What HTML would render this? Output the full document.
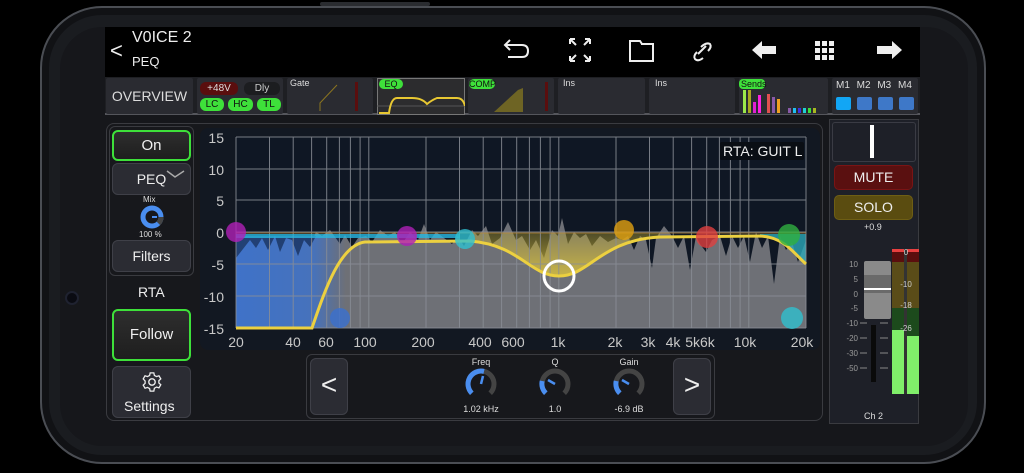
<!DOCTYPE html>
<html><head><meta charset="utf-8"><style>
*{margin:0;padding:0;box-sizing:border-box}
body{width:1024px;height:473px;background:#000;position:relative;overflow:hidden;font-family:"Liberation Sans","DejaVu Sans",sans-serif;color:#e8e8e8}
.a{position:absolute}
.frame{left:40px;top:6px;width:946px;height:458px;border-radius:62px;background:#1a1c20;border:2px solid #4a4d53;box-shadow:inset 0 0 0 7px #111215}
.screen{left:60px;top:27px;width:908px;height:419px;border-radius:42px;background:#16171b;overflow:hidden}
.hdr{left:105px;top:27px;width:815px;height:50px;background:#000}
.tile{background:#2a2b31;border-radius:2px}
.btn{background:#2b2c33;border:1.5px solid #3f4048;border-radius:6px;text-align:center;color:#eee}
.gbtn{background:linear-gradient(#2e2e2e,#1e1e1e);border:2px solid #3ee03a;border-radius:6px;text-align:center;color:#f0f0f0}
.pill{border-radius:6px;font-size:10px;text-align:center;line-height:13px}
.lbl{font-size:9px;color:#ddd}
</style></head><body>
<div class="a frame"></div>
<div class="a" style="left:320px;top:2px;width:110px;height:4px;background:#2a2c30;border-radius:2px"></div>
<div class="a screen"></div>
<div class="a" style="left:65px;top:291px;width:14px;height:14px;border-radius:50%;background:#0a0b12;border:2px solid #1f2230"></div>
<div class="a hdr"></div>
<div class="a" style="left:110px;top:38px;font-size:22px;color:#eee">&lt;</div>
<div class="a" style="left:132px;top:29px;font-size:16px;color:#eee">V0ICE 2</div>
<div class="a" style="left:132px;top:54px;font-size:13px;color:#eee">PEQ</div>
<svg class="a" style="left:500px;top:34px" width="420" height="34" viewBox="0 0 420 34" fill="none" stroke="#eee" stroke-width="2">
<path d="M10 6 L5 11 L10 16 M5 11 H22 Q28 11 28 17 Q28 23 22 23 H8"/>
<path d="M70 5 L76 11 M70 5 h5 M70 5 v5 M90 5 L84 11 M90 5 h-5 M90 5 v5 M70 27 L76 21 M70 27 h5 M70 27 v-5 M90 27 L84 21 M90 27 h-5 M90 27 v-5"/>
<path d="M130 7 H140 L142 10 H153 V27 H130 Z M141 10 H153"/>
<path d="M198 20 L206 12 M201 13 Q206 8 210 10 Q212 13 208 17 M203 24 Q198 28 195 25 Q193 22 197 18"/>
<polygon points="252,16 262,7 262,12 276,12 276,20 262,20 262,25" fill="#eee" stroke="none"/>
<g fill="#eee" stroke="none"><rect x="315" y="7" width="5" height="5"/><rect x="322" y="7" width="5" height="5"/><rect x="329" y="7" width="5" height="5"/><rect x="315" y="14" width="5" height="5"/><rect x="322" y="14" width="5" height="5"/><rect x="329" y="14" width="5" height="5"/><rect x="315" y="21" width="5" height="5"/><rect x="322" y="21" width="5" height="5"/><rect x="329" y="21" width="5" height="5"/></g>
<polygon points="402,16 392,7 392,12 377,12 377,20 392,20 392,25" fill="#eee" stroke="none"/>
</svg>
<!-- strip -->
<div class="a" style="left:105px;top:77px;width:815px;height:38px;background:#1e1f23;border-bottom:2px solid #55565c"></div>
<div class="a tile" style="left:106px;top:78px;width:87px;height:36px;font-size:14px;line-height:36px;text-align:center;color:#ddd">OVERVIEW</div>
<div class="a tile" style="left:197px;top:78px;width:86px;height:36px"></div>
<div class="a pill" style="left:200px;top:82px;width:38px;background:#5a0e0e;color:#ddd">+48V</div>
<div class="a pill" style="left:244px;top:82px;width:36px;background:#1c1d20;color:#ccc">Dly</div>
<div class="a pill" style="left:200px;top:98px;width:24px;background:#3ee03a;color:#111">LC</div>
<div class="a pill" style="left:228px;top:98px;width:25px;background:#3ee03a;color:#111">HC</div>
<div class="a pill" style="left:257px;top:98px;width:24px;background:#3ee03a;color:#111">TL</div>
<div class="a tile" style="left:287px;top:78px;width:86px;height:36px"></div>
<div class="a lbl" style="left:290px;top:78px">Gate</div>
<svg class="a" style="left:287px;top:78px" width="86" height="36"><path d="M33 33 V25 L50 7" stroke="#8a7420" fill="none"/><rect x="68" y="4" width="3" height="29" fill="#5a0e0e"/></svg>
<div class="a" style="left:377px;top:78px;width:88px;height:37px;background:#2c2c2e;border:1px solid #777"></div>
<div class="a pill" style="left:379px;top:79px;width:24px;height:10px;line-height:10px;background:#3ee03a;color:#111;font-size:9px">EQ</div>
<svg class="a" style="left:377px;top:78px" width="88" height="37"><path d="M0 28 H88" stroke="#555"/><path d="M2 35 H12 Q14 20 20 20 H35 Q45 20 50 26 Q55 22 60 20 H80 Q86 20 88 28" stroke="#e8c832" stroke-width="2" fill="none"/></svg>
<div class="a tile" style="left:468px;top:78px;width:86px;height:36px"></div>
<div class="a pill" style="left:469px;top:79px;width:26px;height:10px;line-height:10px;background:#3ee03a;color:#111;font-size:9px">COMP</div>
<svg class="a" style="left:468px;top:78px" width="86" height="36"><polygon points="26,34 50,12 55,10 55,34" fill="#6e6424"/><rect x="77" y="4" width="3" height="29" fill="#5a0e0e"/></svg>
<div class="a tile" style="left:558px;top:78px;width:87px;height:36px"></div>
<div class="a lbl" style="left:563px;top:78px">Ins</div>
<div class="a tile" style="left:649px;top:78px;width:86px;height:36px"></div>
<div class="a lbl" style="left:655px;top:78px">Ins</div>
<div class="a tile" style="left:739px;top:78px;width:89px;height:36px"></div>
<svg class="a" style="left:739px;top:78px" width="89" height="36">
<rect x="0" y="1" width="26" height="10" rx="4" fill="#3ee03a"/><text x="2" y="9" font-size="9" fill="#111" font-family="Liberation Sans">Sends</text>
<rect x="4" y="12" width="3" height="23" fill="#9be84a"/><rect x="9" y="12" width="3" height="23" fill="#a8a820"/><rect x="14" y="24" width="3" height="11" fill="#e020d0"/><rect x="19" y="17" width="3" height="18" fill="#ff20e0"/>
<rect x="28" y="16" width="3" height="19" fill="#e05050"/><rect x="33" y="19" width="3" height="16" fill="#8a5aa8"/><rect x="38" y="21" width="3" height="14" fill="#f0a020"/>
<rect x="49" y="30" width="3" height="5" fill="#8a5aa8"/><rect x="54" y="30" width="3" height="5" fill="#20c0f0"/><rect x="59" y="30" width="3" height="5" fill="#4030e0"/><rect x="64" y="30" width="3" height="5" fill="#20d0d0"/><rect x="69" y="30" width="3" height="5" fill="#3ee03a"/><rect x="74" y="30" width="3" height="5" fill="#a8b820"/>
</svg>
<div class="a tile" style="left:832px;top:78px;width:86px;height:36px"></div>
<div class="a" style="left:836px;top:80px;font-size:10px;color:#ddd;word-spacing:4px">M1 M2 M3 M4</div>
<div class="a" style="left:836px;top:97px;width:15px;height:13px;background:#12a6f5;border-radius:2px"></div>
<div class="a" style="left:857px;top:97px;width:15px;height:13px;background:#3e78c8;border-radius:2px"></div>
<div class="a" style="left:878px;top:97px;width:15px;height:13px;background:#3e78c8;border-radius:2px"></div>
<div class="a" style="left:899px;top:97px;width:15px;height:13px;background:#3e78c8;border-radius:2px"></div>
<!-- main panel -->
<div class="a" style="left:106px;top:123px;width:717px;height:298px;border:1.5px solid #3a3b40;border-radius:8px;background:#17181c"></div>
<div class="a" style="left:109px;top:126px;width:85px;height:150px;border:1.5px solid #3a3b40;border-radius:6px"></div>
<div class="a gbtn" style="left:112px;top:130px;width:79px;height:31px;font-size:15px;line-height:27px">On</div>
<div class="a btn" style="left:112px;top:163px;width:79px;height:32px;font-size:14px;line-height:30px">PEQ</div>
<svg class="a" style="left:165px;top:168px" width="22" height="12"><path d="M2 3 L10 9 L19 3" stroke="#aaa" stroke-width="1.5" fill="none"/></svg>
<div class="a" style="left:143px;top:195px;font-size:8px;color:#ddd">Mix</div>
<svg class="a" style="left:139px;top:204px" width="26" height="26"><circle cx="13" cy="13" r="9" fill="none" stroke="#4a8ef0" stroke-width="5"/><path d="M19.4 19.4 A9 9 0 0 0 22 13" stroke="#444" stroke-width="5" fill="none"/><path d="M13 13 L18 13" stroke="#4a8ef0" stroke-width="2"/></svg>
<div class="a" style="left:139px;top:230px;font-size:8px;color:#ddd">100 %</div>
<div class="a btn" style="left:112px;top:240px;width:79px;height:32px;font-size:14px;line-height:30px">Filters</div>
<div class="a" style="left:138px;top:284px;font-size:14px;color:#eee">RTA</div>
<div class="a gbtn" style="left:112px;top:309px;width:79px;height:52px;font-size:15px;line-height:48px">Follow</div>
<div class="a btn" style="left:112px;top:366px;width:79px;height:52px"></div>
<svg class="a" style="left:141px;top:371px" width="22" height="22" viewBox="0 0 24 24"><circle cx="12" cy="12" r="3.5" fill="none" stroke="#eee" stroke-width="1.5"/><path d="M10 2h4l.6 2.8 2.3 1.3 2.7-.9 2 3.4-2.1 1.9v2.6l2.1 1.9-2 3.4-2.7-.9-2.3 1.3L14 22h-4l-.6-2.8-2.3-1.3-2.7.9-2-3.4 2.1-1.9v-2.6L2.4 8.6l2-3.4 2.7.9 2.3-1.3z" fill="none" stroke="#eee" stroke-width="1.4"/></svg>
<div class="a" style="left:124px;top:398px;font-size:14px;color:#eee">Settings</div>
<!-- graph -->
<div class="a" style="left:200px;top:128px;width:620px;height:222px;background:#121822;border-radius:8px"></div>
<svg class="a" style="left:0;top:0" width="1024" height="473" font-family="Liberation Sans,sans-serif">
<defs>
<linearGradient id="bl" x1="0" x2="1"><stop offset="0" stop-color="#3f72c8"/><stop offset=".7" stop-color="#3f72c8" stop-opacity=".85"/><stop offset="1" stop-color="#3f72c8" stop-opacity="0"/></linearGradient>
<linearGradient id="yl" x1="0" y1="0" x2="0" y2="1"><stop offset="0" stop-color="#c8b030" stop-opacity=".35"/><stop offset="1" stop-color="#d8c040" stop-opacity=".85"/></linearGradient>
</defs>
<rect x="236" y="137" width="570" height="191" fill="#0f1724"/>
<polygon fill="#6e7076" points="236,236 250,240 256,248 262,238 268,250 275,236 280,252 286,238 292,240 298,256 304,240 310,247 316,232 322,236 330,230 340,244 345,235 352,247 358,238 366,236 372,242 380,230 388,236 395,232 402,244 410,232 418,240 424,224 430,240 436,232 444,238 452,244 458,236 464,246 472,230 478,236 486,226 492,244 500,238 508,222 516,240 522,236 530,250 536,240 544,258 552,230 558,236 562,218 568,244 574,232 580,238 586,234 592,246 600,236 608,242 616,238 622,240 628,236 634,250 640,236 646,240 652,268 656,238 664,226 672,236 678,248 684,236 690,270 696,236 700,244 706,252 712,240 720,236 726,256 732,236 738,248 744,236 750,262 756,232 762,248 768,236 774,284 780,236 786,250 792,242 798,262 806,240 806,328 236,328"/>
<rect x="236" y="236" width="110" height="92" fill="url(#bl)"/>
<polygon points="236,258 250,240 256,248 262,238 268,250 275,236 280,252 286,238 292,240 298,256 304,240 310,247 316,236 236,236" fill="#1c3560" opacity=".8"/>
<path d="M470,233 L660,233 L660,237 C600,240 590,276 559,276 C530,276 520,245 470,241 Z" fill="url(#yl)"/>
<path d="M760,234 L806,234 L806,262 C795,255 785,237 760,236Z" fill="#2aa8b8" opacity=".8"/>
<g stroke="#8a8e96" stroke-width="1" fill="none" opacity=".85">
<path d="M236 137V328M269.5 137V328M293.2 137V328M311.6 137V328M326.7 137V328M339.4 137V328M350.4 137V328M360.1 137V328M368.8 137V328M426 137V328M459.5 137V328M483.2 137V328M501.6 137V328M516.7 137V328M529.4 137V328M540.4 137V328M550.1 137V328M558.8 137V328M616 137V328M649.5 137V328M673.2 137V328M691.6 137V328M706.7 137V328M719.4 137V328M730.4 137V328M740.1 137V328M748.8 137V328M806 137V328"/>
<path d="M236 137H806M236 169H806M236 200H806M236 232H806M236 264H806M236 296H806M236 328H806"/>
</g>
<path d="M236 236H460" stroke="#2ab8e0" stroke-width="4" opacity=".8"/>
<path d="M236 233H806" stroke="#c08a30" stroke-width="1" opacity=".7"/>
<path d="M236,328 L312,328 C325,290 340,245 365,242 L470,241 C520,245 530,276 559,276 C590,276 600,240 660,237 L760,236 C785,237 795,255 806,264" stroke="#ecd040" stroke-width="3" fill="none"/>
<g opacity=".8">
<circle cx="236" cy="232" r="10" fill="#b020b8"/><circle cx="407" cy="236" r="10" fill="#b020b8"/><circle cx="465" cy="239" r="10" fill="#30c0d0"/>
<circle cx="340" cy="318" r="10" fill="#3a70d0"/><circle cx="624" cy="230" r="10" fill="#e0a010"/><circle cx="707" cy="237" r="11" fill="#e04040"/>
<circle cx="789" cy="235" r="11" fill="#30b040"/><circle cx="792" cy="318" r="11" fill="#30c0d0"/>
</g>
<circle cx="559" cy="276" r="15" fill="none" stroke="#fff" stroke-width="3"/>
<rect x="720" y="142" width="84" height="18" fill="#0a0e14" rx="2"/>
<text x="723" y="156" font-size="14" fill="#eee">RTA: GUIT L</text>
<g font-size="14" fill="#c8c8c8" text-anchor="end">
<text x="224" y="143">15</text><text x="224" y="175">10</text><text x="224" y="206">5</text><text x="224" y="238">0</text><text x="224" y="270">-5</text><text x="224" y="302">-10</text><text x="224" y="334">-15</text></g>
<g font-size="14" fill="#c8c8c8" text-anchor="middle">
<text x="236" y="347">20</text><text x="293" y="347">40</text><text x="326" y="347">60</text><text x="365" y="347">100</text><text x="423" y="347">200</text><text x="480" y="347">400</text><text x="513" y="347">600</text><text x="558" y="347">1k</text><text x="615" y="347">2k</text><text x="648" y="347">3k</text><text x="673" y="347">4k</text><text x="700" y="347">5k6k</text><text x="745" y="347">10k</text><text x="802" y="347">20k</text></g>
</svg>
<!-- knob bar -->
<div class="a" style="left:306px;top:354px;width:409px;height:65px;border:1.5px solid #3a3b40;border-radius:6px"></div>
<div class="a btn" style="left:310px;top:358px;width:38px;height:57px;font-size:28px;line-height:52px;font-weight:100">&lt;</div>
<div class="a btn" style="left:673px;top:358px;width:38px;height:57px;font-size:28px;line-height:52px">&gt;</div>
<svg class="a" style="left:440px;top:355px" width="220" height="62" font-family="Liberation Sans,sans-serif" font-size="9" fill="#ddd" text-anchor="middle">
<text x="41" y="10">Freq</text><text x="115" y="10">Q</text><text x="189" y="10">Gain</text>
<g fill="none" stroke-width="5">
<path d="M31.8 38.2 A13 13 0 1 1 50.2 38.2" stroke="#444"/><path d="M31.8 38.2 A13 13 0 0 1 44 16.4" stroke="#4a8ef0"/>
<path d="M105.8 38.2 A13 13 0 1 1 124.2 38.2" stroke="#444"/><path d="M105.8 38.2 A13 13 0 0 1 102.2 26" stroke="#4a8ef0"/>
<path d="M179.8 38.2 A13 13 0 1 1 198.2 38.2" stroke="#444"/><path d="M179.8 38.2 A13 13 0 0 1 176.2 26" stroke="#4a8ef0"/>
</g>
<g stroke="#4a8ef0" stroke-width="2.5"><path d="M41 29 L43 21"/><path d="M115 29 L108 25"/><path d="M189 29 L182 25"/></g>
<text x="41" y="57">1.02 kHz</text><text x="115" y="57">1.0</text><text x="189" y="57">-6.9 dB</text>
</svg>
<!-- right strip -->
<div class="a" style="left:829px;top:119px;width:90px;height:305px;background:#1e2028;border:1.5px solid #3a3b40"></div>
<div class="a" style="left:832px;top:122px;width:84px;height:40px;border:1px solid #3a3b44;border-radius:3px"></div>
<div class="a" style="left:870px;top:125px;width:4px;height:33px;background:#fff"></div>
<div class="a" style="left:834px;top:165px;width:79px;height:25px;background:#5a1010;border:1.5px solid #7a1414;border-radius:5px;font-size:14px;text-align:center;line-height:22px;color:#eee">MUTE</div>
<div class="a" style="left:834px;top:195px;width:79px;height:25px;background:#5a4c10;border:1.5px solid #6e5e14;border-radius:5px;font-size:14px;text-align:center;line-height:22px;color:#eee">SOLO</div>
<div class="a" style="left:864px;top:222px;font-size:9px;color:#ddd">+0.9</div>
<svg class="a" style="left:829px;top:245px" width="90" height="170" font-family="Liberation Sans,sans-serif" font-size="8" fill="#999" text-anchor="end">
<text x="29" y="22">10</text><text x="29" y="37">5</text><text x="29" y="52">0</text><text x="29" y="66">-5</text><text x="29" y="81">-10</text><text x="29" y="96">-20</text><text x="29" y="111">-30</text><text x="29" y="126">-50</text>
<g stroke="#888"><path d="M31 78h7M51 78h8M31 93h7M51 93h8M31 108h7M51 108h8M31 123h7M51 123h8"/></g>
<rect x="42" y="80" width="5" height="57" fill="#0a0a0a"/>
<rect x="35" y="16" width="27" height="58" rx="2" fill="#8a8a8a"/>
<rect x="35" y="30" width="27" height="18" fill="#6a6a6a"/>
<rect x="35" y="43" width="27" height="2" fill="#fff"/>
<rect x="63" y="4" width="30" height="13" fill="#5a0e0e"/><rect x="63" y="4" width="30" height="3" fill="#e84040"/>
<rect x="63" y="17" width="30" height="46" fill="#5a4c18"/>
<rect x="63" y="63" width="30" height="33" fill="#1c4a1c"/>
<rect x="63" y="85" width="12" height="64" fill="#80ee6a"/><rect x="78" y="91" width="13" height="58" fill="#80ee6a"/>
<rect x="75" y="4" width="3" height="145" fill="#333"/>
<g fill="#ccc" text-anchor="middle"><text x="77" y="10">0</text><text x="77" y="42">-10</text><text x="77" y="63">-18</text><text x="77" y="86">-26</text></g>
</svg>
<div class="a" style="left:864px;top:411px;font-size:9px;color:#ddd">Ch 2</div>
</body></html>
